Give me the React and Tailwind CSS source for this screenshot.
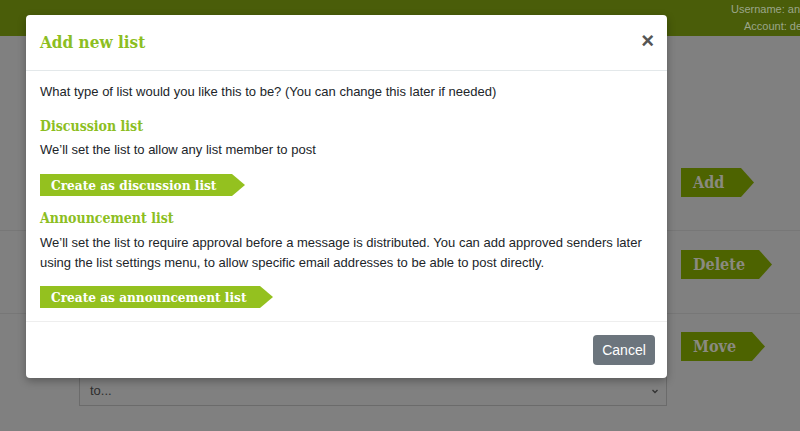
import React from "react";

const slab = { fontFamily: '"DejaVu Serif", serif' };

function Arrow({ children, className }) {
  return (
    <div
      className={
        "inline-flex items-center font-bold [font-stretch:condensed] [clip-path:polygon(0_0,calc(100%-13px)_0,100%_50%,calc(100%-13px)_100%,0_100%)] " +
        className
      }
      style={slab}
    >
      {children}
    </div>
  );
}

export default function App() {
  return (
    <div
      className="relative w-[800px] h-[431px] overflow-hidden bg-[#808080]"
      style={{ fontFamily: '"Liberation Sans", Arial, sans-serif' }}
    >
      {/* top bar */}
      <div className="h-[36px] bg-[#4a5d09] flex">
        <div className="w-[731px] shrink-0" />
        <div className="flex flex-col whitespace-nowrap text-[11px] leading-[17px] text-[#9ba68a] pt-[1px]">
          <span>Username: andy</span>
          <span className="pl-[13px]">Account: demo</span>
        </div>
      </div>

      {/* background rows */}
      <div className="h-[195px] border-b border-[#777] flex flex-col items-end pr-[46px] pt-[132px]">
        <Arrow className="h-[29px] w-[73px] bg-[#4d6300] text-[#8a8a80] text-[16px] pl-[12px]">Add</Arrow>
      </div>
      <div className="h-[83px] border-b border-[#777] flex flex-col items-end pr-[28px] pt-[19px]">
        <Arrow className="h-[29px] w-[91px] bg-[#4d6300] text-[#8a8a80] text-[16px] pl-[12px]">Delete</Arrow>
      </div>
      <div className="flex pt-[18px] pr-[35px] justify-end">
        <Arrow className="h-[29px] w-[84px] bg-[#4d6300] text-[#8a8a80] text-[16px] pl-[12px]">Move</Arrow>
      </div>
      <div className="flex pt-[15px]">
        <div className="w-[79px] shrink-0" />
        <div className="w-[588px] h-[30px] border border-[#6b6b6b] flex items-center justify-between pl-[10px] pr-[6px] text-[13px] text-[#2e2e2e]">
          <span>to...</span>
          <svg width="10" height="10" viewBox="0 0 10 10" fill="none" stroke="#333" strokeWidth="1.4">
            <path d="M2.5 4 L5 6.5 L7.5 4" />
          </svg>
        </div>
      </div>

      {/* modal */}
      <div className="absolute left-[26px] top-[15px] w-[641px] h-[363px] bg-white rounded-[4px] shadow-[0_3px_9px_rgba(0,0,0,0.3)] flex flex-col">
        <div className="h-[56px] border-b border-[#e3e8ea] flex items-center justify-between pl-[14px] pr-[13px]">
          <div className="text-[17px] font-bold text-[#8cbe22] [font-stretch:condensed] pt-[1px]" style={slab}>
            Add new list
          </div>
          <div className="text-[22px] font-bold text-[#555] leading-none pb-[3px]">×</div>
        </div>
        <div className="flex-1 flex flex-col items-start pl-[14px] pt-[11px] text-[13px] leading-[20px] text-[#212529] border-b border-[#eeeeee]">
          <p>What type of list would you like this to be? (You can change this later if needed)</p>
          <div className="mt-[14px] text-[14px] font-bold text-[#8cbe22] [font-stretch:condensed]" style={slab}>
            Discussion list
          </div>
          <p className="mt-[4px]">We’ll set the list to allow any list member to post</p>
          <Arrow className="mt-[14px] h-[22px] w-[205px] bg-[#94c11f] text-white text-[13.5px] pl-[11px]">
            Create as discussion list
          </Arrow>
          <div className="mt-[12px] text-[14px] font-bold text-[#8cbe22] [font-stretch:condensed]" style={slab}>
            Announcement list
          </div>
          <p className="mt-[5px] w-[610px]">
            We’ll set the list to require approval before a message is distributed. You can add approved senders later using the list settings menu, to allow specific email addresses to be able to post directly.
          </p>
          <Arrow className="mt-[13px] h-[22px] w-[233px] bg-[#94c11f] text-white text-[13.5px] pl-[11px]">
            Create as announcement list
          </Arrow>
        </div>
        <div className="h-[56px] flex items-center justify-end pr-[12px]">
          <div className="h-[30px] w-[62px] rounded-[4px] bg-[#6c757d] text-white text-[14px] flex items-center justify-center">
            Cancel
          </div>
        </div>
      </div>
    </div>
  );
}
